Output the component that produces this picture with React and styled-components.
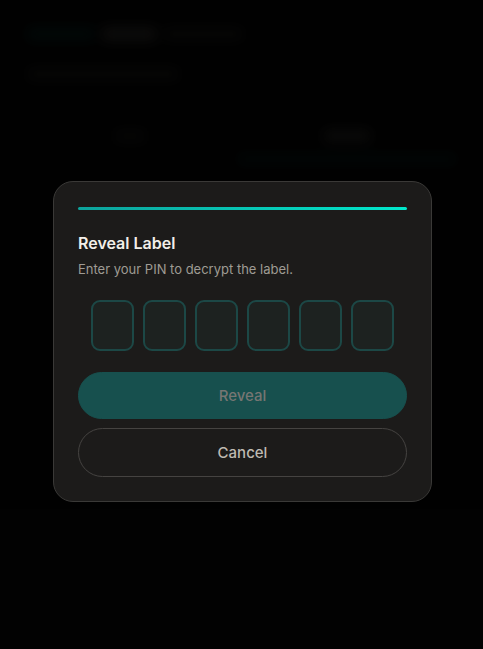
import React from 'react';
import styled, { createGlobalStyle } from 'styled-components';

const GlobalStyle = createGlobalStyle`
  html, body {
    margin: 0;
    padding: 0;
    background: #000;
    font-family: Inter, "Noto Sans", sans-serif;
  }
  * { box-sizing: border-box; }
`;

const Page = styled.div`
  position: relative;
  width: 100%;
  height: 649px;
  overflow: hidden;
  background: #030303;
`;

const Backdrop = styled.div`
  height: 100%;
  padding: 22px 28px;
  filter: blur(6px);
  opacity: 0.85;
`;

const HeadRow = styled.div`
  display: flex;
  align-items: center;
  gap: 8px;
  height: 24px;
`;

const Blob = styled.div`
  height: ${({ $h }) => $h || 12}px;
  width: ${({ $w }) => $w}px;
  border-radius: 4px;
  background: ${({ $c }) => $c};
`;

const SubRow = styled.div`
  margin-top: 22px;
`;

const Tabs = styled.div`
  display: grid;
  grid-template-columns: 1fr 1fr;
  margin-top: 50px;
  margin-left: -6px;
`;

const Tab = styled.div`
  display: flex;
  flex-direction: column;
  align-items: center;
  gap: 14px;
`;

const TabLine = styled.div`
  align-self: stretch;
  height: 6px;
  background: ${({ $on }) => ($on ? '#04100f' : 'transparent')};
`;

const Overlay = styled.div`
  position: absolute;
  inset: 0;
  display: flex;
  justify-content: center;
  align-items: center;
  padding: 33px 0 0 2px;
  background: rgba(0, 0, 0, 0.35);
`;

const Modal = styled.div`
  width: 379px;
  padding: 25px 24px 24px 24px;
  background: #1c1b1a;
  border: 1px solid #3a3937;
  border-radius: 20px;
  display: flex;
  flex-direction: column;
`;

const Progress = styled.div`
  height: 3px;
  border-radius: 2px;
  background: linear-gradient(90deg, #0da39c, #00e8cc);
`;

const Title = styled.h2`
  margin: 22px 0 0;
  font-size: 16px;
  line-height: 22px;
  font-weight: 600;
  color: #f2efe9;
`;

const Subtitle = styled.p`
  margin: 6px 0 0;
  font-size: 13px;
  line-height: 18px;
  color: #9f9b94;
`;

const PinRow = styled.div`
  display: flex;
  justify-content: center;
  gap: 9px;
  margin-top: 22px;
`;

const PinBox = styled.input`
  width: 43px;
  height: 51px;
  border-radius: 9px;
  border: 2px solid #1c4846;
  background: #1d2220;
  outline: none;
  color: #f2efe9;
  text-align: center;
  font-size: 20px;
`;

const Button = styled.button`
  height: ${({ $h }) => $h}px;
  border-radius: 999px;
  font-family: inherit;
  font-size: 15px;
  font-weight: 500;
  cursor: pointer;
  border: 1px solid ${({ $primary }) => ($primary ? '#17504e' : '#454341')};
  background: ${({ $primary }) => ($primary ? '#17504e' : 'transparent')};
  color: ${({ $primary }) => ($primary ? '#767673' : '#bfbab2')};
  margin-top: ${({ $mt }) => $mt}px;
`;

export default function App() {
  return (
    <>
      <GlobalStyle />
      <Page>
        <Backdrop>
          <HeadRow>
            <Blob $w={66} $c="#04100f" />
            <Blob $w={54} $h={14} $c="#161514" />
            <Blob $w={78} $c="#0b0b0a" />
          </HeadRow>
          <SubRow>
            <Blob $w={150} $c="#0b0b0a" />
          </SubRow>
          <Tabs>
            <Tab>
              <Blob $w={30} $c="#0a0a09" />
              <TabLine />
            </Tab>
            <Tab>
              <Blob $w={46} $c="#121211" />
              <TabLine $on />
            </Tab>
          </Tabs>
        </Backdrop>
        <Overlay>
          <Modal>
            <Progress />
            <Title>Reveal Label</Title>
            <Subtitle>Enter your PIN to decrypt the label.</Subtitle>
            <PinRow>
              {[0, 1, 2, 3, 4, 5].map(i => (
                <PinBox key={i} type="password" maxLength={1} />
              ))}
            </PinRow>
            <Button $primary $h={47} $mt={21}>Reveal</Button>
            <Button $h={49} $mt={9}>Cancel</Button>
          </Modal>
        </Overlay>
      </Page>
    </>
  );
}
